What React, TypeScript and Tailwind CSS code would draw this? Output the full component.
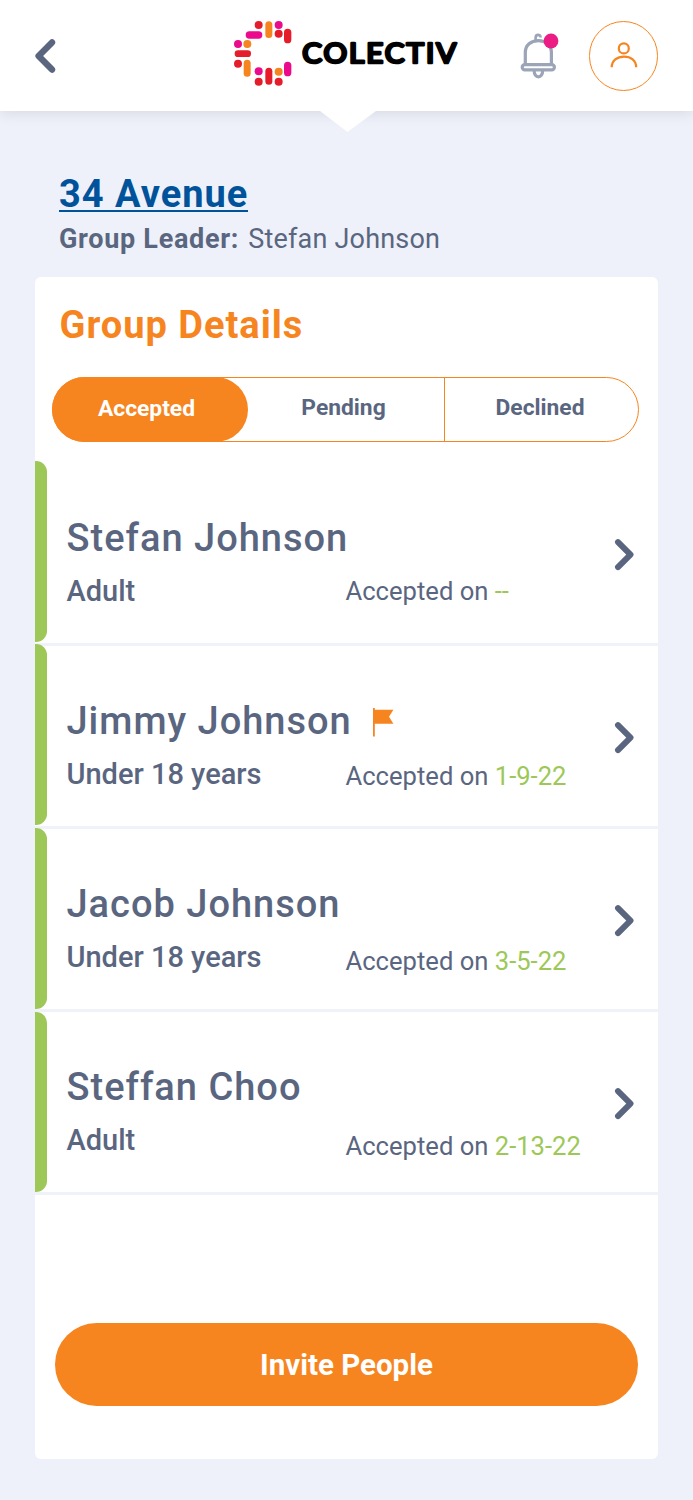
import React, { useState } from "react";

const tabs = [
  { label: "Accepted", css: "w-[196px] pr-[7px]" },
  { label: "Pending", css: "w-[197px] pr-[4px]" },
  { label: "Declined", css: "w-[194px] pr-[3px] border-l border-[#f6851f]" },
];

const people = [
  { name: "Stefan Johnson", role: "Adult", date: "--", flag: false, bar: "-mt-[2px] h-[181px]", dateCss: "-mt-px" },
  { name: "Jimmy Johnson", role: "Under 18 years", date: "1-9-22", flag: true, bar: "-mt-[2px] h-[181px]", dateCss: "mt-px" },
  { name: "Jacob Johnson", role: "Under 18 years", date: "3-5-22", flag: false, bar: "-mt-px h-[181px]", dateCss: "mt-[3px]" },
  { name: "Steffan Choo", role: "Adult", date: "2-13-22", flag: false, bar: "h-[180px]", dateCss: "mt-[5px]" },
];

function Logo() {
  return (
    <div className="flex items-start ml-[176px]">
      <svg className="mt-[21px]" width="58" height="65" viewBox="27 33 174 195">
        <g fill="#e51c2a">
          <circle cx="101" cy="45" r="12" />
          <circle cx="161" cy="71" r="12" />
          <circle cx="39" cy="161" r="12" />
          <circle cx="101" cy="215" r="12" />
          <circle cx="161" cy="215" r="12" />
          <rect x="177" y="56" width="22" height="44" rx="11" />
          <rect x="29" y="121" width="49" height="20" rx="10" />
          <rect x="121" y="173" width="21" height="51" rx="10.5" />
        </g>
        <g fill="#ec0a8c">
          <circle cx="161" cy="45" r="12" />
          <circle cx="39" cy="102" r="12" />
          <circle cx="101" cy="184" r="12" />
          <rect x="62" y="64" width="50" height="22" rx="11" />
          <rect x="177" y="155" width="22" height="44" rx="11" />
        </g>
        <g fill="#f6851f">
          <circle cx="67" cy="102" r="12" />
          <circle cx="161" cy="185" r="12" />
          <rect x="121" y="34" width="21" height="50" rx="10.5" />
          <rect x="56" y="149" width="21" height="51" rx="10.5" />
        </g>
      </svg>
      <svg className="ml-[8px] mt-[36px]" width="162" height="34" viewBox="0 0 162 34">
        <text
          x="2"
          y="26.5"
          textLength="140"
          transform="scale(1.1 1)"
          className="font-['Lato',sans-serif] text-[26.8px] font-normal"
          stroke="#000"
          strokeWidth="2.7"
          strokeLinejoin="round"
        >
          COLECTIV
        </text>
      </svg>
    </div>
  );
}

function Header() {
  return (
    <header className="relative flex items-start h-[111px] bg-white shadow-[0_2px_14px_rgba(0,0,0,0.1)]">
      <svg className="ml-[34px] mt-[38px]" width="24" height="36" viewBox="0 0 24 36" fill="none" stroke="#5a667f" strokeWidth="6.4" strokeLinecap="round" strokeLinejoin="round">
        <path d="M18 4.4L4.6 18L18 31.6" />
      </svg>
      <Logo />
      <svg className="ml-[58px] mt-[32px]" width="40" height="48" viewBox="0 0 40 48" fill="none" stroke="#9ba5b7" strokeWidth="3.2">
        <path d="M5.3 32V20.5C5.3 13 11 8.6 18.4 8.6S31.4 13 31.4 20.5V32" />
        <path d="M15.6 9V5.8C15.6 1.9 20.6 1.9 20.6 5.6" strokeWidth="2.6" />
        <rect x="2.2" y="32.7" width="32.2" height="5.2" rx="2.6" />
        <path d="M14.2 38.8C14 46.8 22.8 46.8 22.6 38.8" />
        <circle cx="31" cy="9" r="7.4" fill="#ec1c85" stroke="none" />
      </svg>
      <div className="ml-[29px] mt-[21px] flex h-[70px] w-[69px] items-center justify-center rounded-full border border-[#f6851f]">
        <svg width="30" height="30" viewBox="0 0 30 30" fill="none" stroke="#f6851f" strokeWidth="2.2">
          <circle cx="14.8" cy="7.4" r="5" />
          <path d="M2.7 26.2C2.8 19.4 8.1 15.6 15 15.6S27.1 19.4 27.2 26.2" />
        </svg>
      </div>
      <svg className="absolute left-[320px] top-[111px]" width="56" height="21" viewBox="0 0 56 21">
        <path d="M0 0H56L27.5 21Z" fill="#fff" />
      </svg>
    </header>
  );
}

function App() {
  const [active, setActive] = useState("Accepted");

  return (
    <div className="w-[693px] h-[1500px] overflow-hidden bg-[#eef1f9] font-['Roboto',sans-serif] text-[#5a667f]">
      <Header />
      <div className="pl-[59px] pt-[59px]">
        <h1 className="text-[38px] leading-[48px] font-bold tracking-[1px] text-[#00539b]">
          <a className="border-b-2 border-[#00539b] inline-block h-[42px]">34 Avenue</a>
        </h1>
        <p className="mt-px text-[27px] leading-[40px] whitespace-nowrap">
          <b className="mr-[9px] tracking-[0.7px]">Group Leader:</b>
          <span className="tracking-[0.2px]">Stefan Johnson</span>
        </p>
      </div>

      <main className="ml-[35px] mt-[18px] flex flex-col w-[623px] h-[1182px] rounded-md bg-white">
        <h2 className="ml-[24.5px] mt-[24px] text-[38px] leading-[48px] font-bold tracking-[1px] text-[#f6851f]">Group Details</h2>

        <div className="ml-[17px] mt-[28px] flex w-[587px] h-[65px] rounded-full border border-[#f6851f]">
          {tabs.map((tab) => (
            <button
              key={tab.label}
              onClick={() => setActive(tab.label)}
              className={
                tab.css +
                (active == tab.label ? " bg-[#f6851f] text-white rounded-full -m-px pt-[2px]" : "") +
                " shrink-0 pb-[2px] text-[22.8px] font-bold"
              }
            >
              {tab.label}
            </button>
          ))}
        </div>

        <ul className="mt-[21px]">
          {people.map((p) => (
            <li key={p.name} className="flex h-[183px] border-b-[3px] border-[#eff2f9]">
              <div className={p.bar + " w-[12px] shrink-0 rounded-r-[11px] bg-[#9dc857]"}></div>
              <div className="ml-[19.5px] mt-[51px] w-[547px] shrink-0">
                <div className="flex items-center h-[48px]">
                  <p className="text-[38px] leading-[48px] font-medium tracking-[1px] whitespace-nowrap">{p.name}</p>
                  {p.flag && (
                    <svg className="ml-[21px] mt-[3px]" width="21" height="29" viewBox="0 0 21 29" fill="#f6851f">
                      <path d="M0 0H1.8V28.5H0Z" />
                      <path d="M1 1.8H20.4L16 8.8L20.4 15.8H1Z" />
                    </svg>
                  )}
                </div>
                <div className="flex mt-[10px]">
                  <p className="-mt-px w-[279px] text-[29px] leading-[40px] font-medium">{p.role}</p>
                  <p className={p.dateCss + " text-[25.6px] leading-[40px] whitespace-nowrap"}>
                    Accepted on <span className="text-[#9dc857]">{p.date}</span>
                  </p>
                </div>
              </div>
              <svg className="mt-[75px] shrink-0" width="22" height="34" viewBox="0 0 22 34" fill="none" stroke="#5a667f" strokeWidth="6" strokeLinecap="round" strokeLinejoin="round">
                <path d="M4 4.1L16.5 16.6L4 29.1" />
              </svg>
            </li>
          ))}
        </ul>

        <button className="ml-[20px] mt-[128px] pt-[2px] w-[583px] h-[83px] rounded-full bg-[#f6851f] text-[29.5px] font-bold text-white">
          Invite People
        </button>
      </main>
    </div>
  );
}

export default App;
